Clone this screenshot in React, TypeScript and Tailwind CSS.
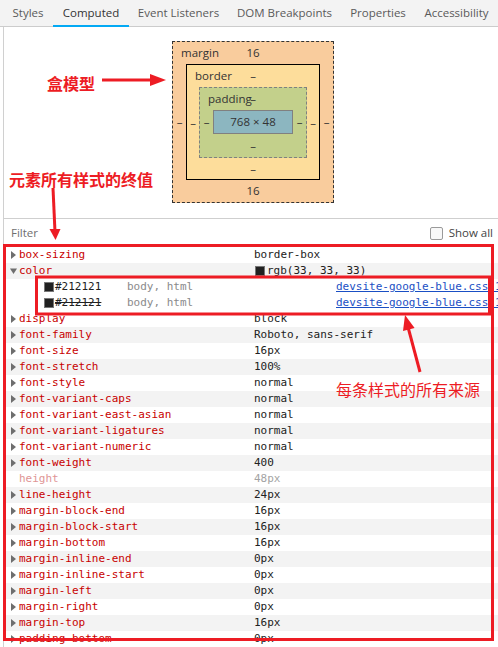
import React from "react";

type Prop = {
  name: string;
  value: string;
  open?: boolean;
  faded?: boolean;
};

const tabs = [
  { label: "Styles", w: "w-[50px]" },
  { label: "Computed", w: "w-[76px]", active: true },
  { label: "Event Listeners", w: "w-[99px]" },
  { label: "DOM Breakpoints", w: "w-[113px]" },
  { label: "Properties", w: "w-[74px]" },
  { label: "Accessibility", w: "w-[83px]" },
];

const before: Prop[] = [
  { name: "box-sizing", value: "border-box" },
  { name: "color", value: "rgb(33, 33, 33)", open: true },
];

const after: Prop[] = [
  { name: "display", value: "block" },
  { name: "font-family", value: "Roboto, sans-serif" },
  { name: "font-size", value: "16px" },
  { name: "font-stretch", value: "100%" },
  { name: "font-style", value: "normal" },
  { name: "font-variant-caps", value: "normal" },
  { name: "font-variant-east-asian", value: "normal" },
  { name: "font-variant-ligatures", value: "normal" },
  { name: "font-variant-numeric", value: "normal" },
  { name: "font-weight", value: "400" },
  { name: "height", value: "48px", faded: true },
  { name: "line-height", value: "24px" },
  { name: "margin-block-end", value: "16px" },
  { name: "margin-block-start", value: "16px" },
  { name: "margin-bottom", value: "16px" },
  { name: "margin-inline-end", value: "0px" },
  { name: "margin-inline-start", value: "0px" },
  { name: "margin-left", value: "0px" },
  { name: "margin-right", value: "0px" },
  { name: "margin-top", value: "16px" },
  { name: "padding-bottom", value: "0px" },
];

function Arrow({ open }: { open?: boolean }) {
  return (
    <svg width="8" height="8" viewBox="0 0 8 8">
      {open ? (
        <polygon points="0,1.5 7,1.5 3.5,7" fill="#6e6e6e" />
      ) : (
        <polygon points="1,0 6,4 1,8" fill="#6e6e6e" />
      )}
    </svg>
  );
}

function PropRow({ p, gray }: { p: Prop; gray: boolean }) {
  return (
    <div
      className={`flex h-[16px] items-center whitespace-nowrap ${
        gray ? "bg-[#f3f3f3]" : "bg-white"
      }`}
    >
      <div className="w-[15px] shrink-0 pl-[6px] flex items-center">
        {!p.faded && <Arrow open={p.open} />}
      </div>
      <div
        className={`w-[235px] shrink-0 ${p.faded ? "text-[#e09595]" : "text-[#c80000]"}`}
      >
        {p.name}
      </div>
      <div
        className={`flex items-center ${
          p.faded ? "text-[#a3a3a3]" : "text-[#212121]"
        }`}
      >
        {p.open && (
          <span className="ml-[1px] mr-[2px] shrink-0 inline-block w-[10px] h-[10px] bg-[#212121] border border-[#777]" />
        )}
        {p.value}
      </div>
    </div>
  );
}

function TraceRow({ struck }: { struck?: boolean }) {
  return (
    <div className="flex h-[16px] items-center whitespace-nowrap bg-white">
      <div className="w-[123px] shrink-0 pl-[40px] flex items-center">
        <span className="shrink-0 inline-block w-[10px] h-[10px] bg-[#212121] border border-[#777]" />
        <span className={`ml-[1px] text-[#212121] ${struck ? "line-through" : ""}`}>
          #212121
        </span>
      </div>
      <div className="w-[209px] shrink-0 text-[#8a8a8a]">body, html</div>
      <div className="shrink-0 text-[#1a4fc4] underline">devsite-google-blue.css:1</div>
    </div>
  );
}

function Side({ w, children }: { w: string; children?: React.ReactNode }) {
  return <div className={`${w} shrink-0 flex items-center justify-center`}>{children}</div>;
}

function TopRow({ h, label, value }: { h: string; label: string; value: string }) {
  return (
    <div className={`${h} grid items-center`}>
      <span className="col-start-1 row-start-1 justify-self-start pl-[8px]">{label}</span>
      <span className="col-start-1 row-start-1 justify-self-center">{value}</span>
    </div>
  );
}

function BoxModel() {
  return (
    <div className="w-[162px] h-[162px] border border-dashed border-[#333] bg-[#f9cc9d] flex flex-col">
      <TopRow h="h-[22px]" label="margin" value="16" />
      <div className="flex">
        <Side w="w-[13px]">–</Side>
        <div className="w-[134px] h-[116px] border border-black bg-[#fddd9b] flex flex-col">
          <TopRow h="h-[22px]" label="border" value="–" />
          <div className="flex">
            <Side w="w-[12px]">–</Side>
            <div className="w-[108px] h-[71px] border border-dashed border-[#808080] bg-[#c3d08b] flex flex-col">
              <TopRow h="h-[22px]" label="padding" value="–" />
              <div className="flex">
                <Side w="w-[13px]">–</Side>
                <div className="w-[80px] h-[24px] border border-[#808080] bg-[#8cb6c0] flex items-center justify-center">
                  768 × 48
                </div>
                <Side w="w-[13px]">–</Side>
              </div>
              <div className="flex-1 flex items-center justify-center">–</div>
            </div>
            <Side w="w-[12px]">–</Side>
          </div>
          <div className="flex-1 flex items-center justify-center">–</div>
        </div>
        <Side w="w-[13px]">–</Side>
      </div>
      <div className="flex-1 flex items-center justify-center">16</div>
    </div>
  );
}

export default function App() {
  let idx = 0;
  return (
    <div className="relative w-[498px] h-[647px] overflow-hidden bg-white font-['Open_Sans','Noto_Sans',sans-serif] text-[11.5px] text-[#333]">
      <div className="flex h-[27px] bg-[#f3f3f3] pl-[3px] shadow-[inset_0_-1px_0_#cccccc]">
        {tabs.map((t) => (
          <div
            key={t.label}
            className={`${t.w} shrink-0 h-[27px] flex items-center justify-center whitespace-nowrap ${
              t.active ? "border-b-2 border-[#03a9f4] text-[#333] pt-[1px]" : "text-[#5a5a5a] pb-[1px]"
            }`}
          >
            {t.label}
          </div>
        ))}
      </div>

      <div className="ml-[3px] border-l border-[#d0d0d0] h-[620px]">
        <div className="h-[191px] pt-[14px] pl-[168px]">
          <BoxModel />
        </div>

        <div className="h-[29px] border-t border-[#cfcfcf] flex items-center justify-between pl-[7px] pr-[5px]">
          <span className="text-[#6f6f6f]">Filter</span>
          <div className="flex items-center gap-[6px] text-[#444]">
            <span className="inline-block w-[13px] h-[13px] rounded-[2px] border border-[#9a9a9a] bg-[#f8f8f8]" />
            Show all
          </div>
        </div>

        <div className="font-['DejaVu_Sans_Mono','Liberation_Mono',monospace] text-[11px] overflow-hidden">
          {before.map((p) => (
            <PropRow key={p.name} p={p} gray={idx++ % 2 === 1} />
          ))}
          <TraceRow />
          <TraceRow struck />
          {(() => {
            idx += 2;
            return null;
          })()}
          {after.map((p) => (
            <PropRow key={p.name} p={p} gray={idx++ % 2 === 1} />
          ))}
        </div>
      </div>

      <svg
        className="absolute left-0 top-0 pointer-events-none"
        width="498"
        height="647"
        viewBox="0 0 498 647"
      >
        <rect x="4.5" y="245.5" width="488" height="394" fill="none" stroke="#ed1c24" strokeWidth="3" />
        <rect x="36.5" y="277" width="453" height="37" fill="none" stroke="#ed1c24" strokeWidth="3" />
        <line x1="102" y1="80" x2="153" y2="80" stroke="#ed1c24" strokeWidth="3" />
        <polygon points="150,74 166,80 150,86" fill="#ed1c24" />
        <line x1="53" y1="188" x2="55" y2="232" stroke="#ed1c24" strokeWidth="3" />
        <polygon points="49.5,229 60.5,229 55.5,240" fill="#ed1c24" />
        <line x1="408" y1="327" x2="420" y2="372" stroke="#ed1c24" strokeWidth="3" />
        <polygon points="405,315 414.6,328 403,331" fill="#ed1c24" />
      </svg>

      <div className="absolute left-[47px] top-[73px] text-[16px] leading-[20px] font-bold text-[#ed1c24] font-['Noto_Sans_CJK_SC',sans-serif]">
        盒模型
      </div>
      <div className="absolute left-[9px] top-[169px] text-[16px] leading-[20px] font-bold text-[#ed1c24] font-['Noto_Sans_CJK_SC',sans-serif]">
        元素所有样式的终值
      </div>
      <div className="absolute left-[336px] top-[379px] text-[16px] leading-[20px] text-[#ed1c24] font-['Noto_Sans_CJK_SC',sans-serif]">
        每条样式的所有来源
      </div>
    </div>
  );
}
